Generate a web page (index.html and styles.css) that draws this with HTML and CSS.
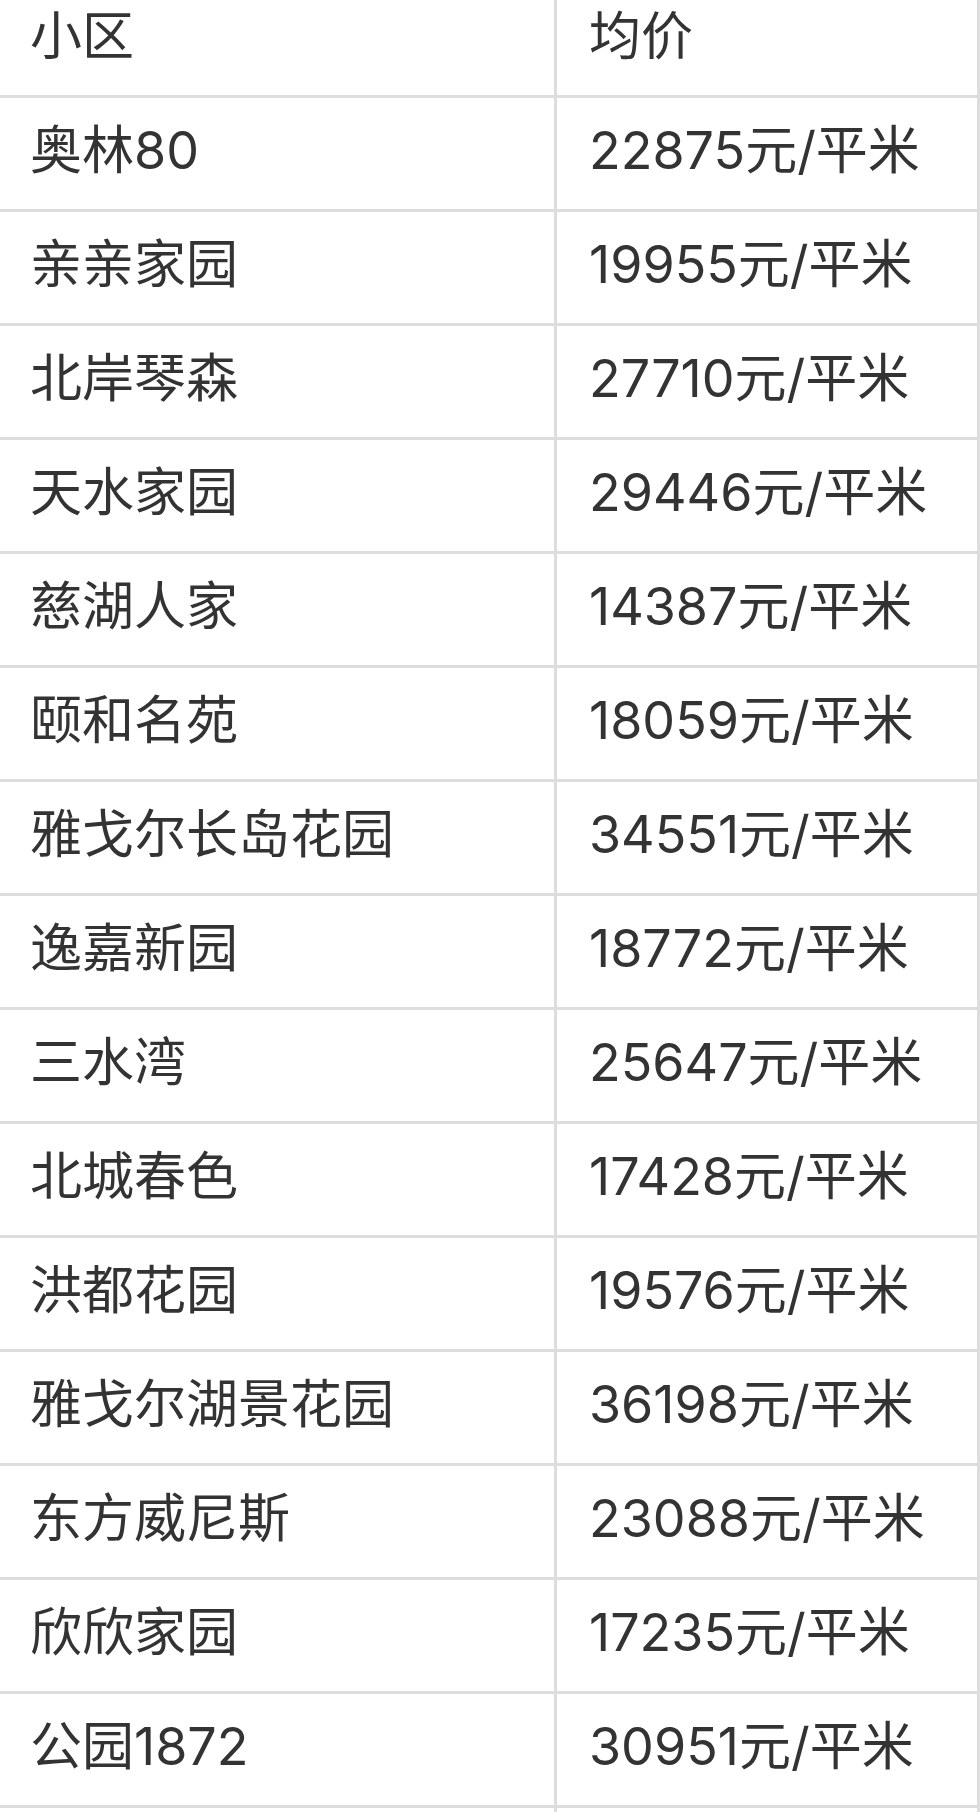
FILE: index.html
```html
<!DOCTYPE html>
<html lang="zh-CN">
<head>
<meta charset="utf-8">
<link rel="stylesheet" href="styles.css">
</head>
<body>
<div class="table">
  <div class="cell name head">小区</div><div class="cell price head">均价</div>
  <div class="cell name">奥林80</div><div class="cell price">22875元/平米</div>
  <div class="cell name">亲亲家园</div><div class="cell price">19955元/平米</div>
  <div class="cell name">北岸琴森</div><div class="cell price">27710元/平米</div>
  <div class="cell name">天水家园</div><div class="cell price">29446元/平米</div>
  <div class="cell name">慈湖人家</div><div class="cell price">14387元/平米</div>
  <div class="cell name">颐和名苑</div><div class="cell price">18059元/平米</div>
  <div class="cell name">雅戈尔长岛花园</div><div class="cell price">34551元/平米</div>
  <div class="cell name">逸嘉新园</div><div class="cell price">18772元/平米</div>
  <div class="cell name">三水湾</div><div class="cell price">25647元/平米</div>
  <div class="cell name">北城春色</div><div class="cell price">17428元/平米</div>
  <div class="cell name">洪都花园</div><div class="cell price">19576元/平米</div>
  <div class="cell name">雅戈尔湖景花园</div><div class="cell price">36198元/平米</div>
  <div class="cell name">东方威尼斯</div><div class="cell price">23088元/平米</div>
  <div class="cell name">欣欣家园</div><div class="cell price">17235元/平米</div>
  <div class="cell name">公园1872</div><div class="cell price">30951元/平米</div>
  <div class="cell name">&nbsp;</div><div class="cell price">&nbsp;</div>
</div>
</body>
</html>
```
FILE: styles.css
```css
html, body {
  margin: 0;
  padding: 0;
  background: #ffffff;
  overflow: hidden;
}
body {
  font-family: "Inter", "Noto Sans CJK SC", sans-serif;
  color: #333333;
}
.table {
  display: grid;
  grid-template-columns: 557px 423px;
  width: 980px;
  margin-top: -16px;
}
.cell {
  box-sizing: border-box;
  height: 114px;
  border-bottom: 3px solid #dddddd;
  border-right: 3px solid #dddddd;
  display: flex;
  align-items: center;
  padding-left: 30px;
  padding-bottom: 6px;
  font-size: 52px;
  font-weight: 400;
  line-height: 1;
  white-space: nowrap;
}
.price {
  padding-left: 32px;
}
```
